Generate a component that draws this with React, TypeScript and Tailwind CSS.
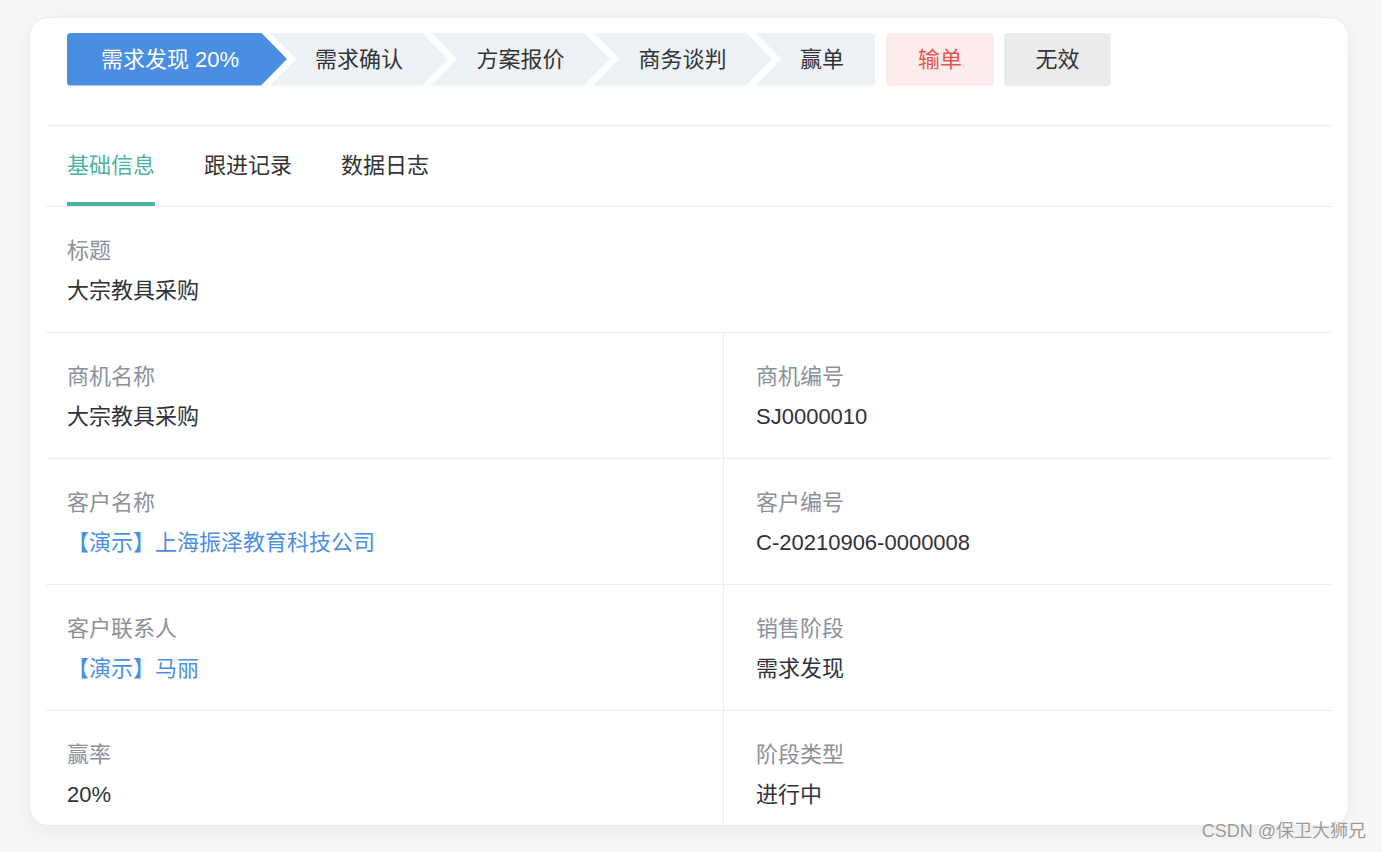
import React from "react";

const FONT = { fontFamily: '"Liberation Sans", "Noto Sans CJK SC", sans-serif' };

const steps = [
  { label: "需求发现 20%", w: "w-[220px]", active: true, first: true },
  { label: "需求确认", w: "w-[178px]" },
  { label: "方案报价", w: "w-[179px]" },
  { label: "商务谈判", w: "w-[179px]" },
];

function Field({ label, value, link }: { label: string; value: string; link?: boolean }) {
  return (
    <div>
      <div className="text-[22px] leading-[26px] text-[#8c9099]">{label}</div>
      <div className={`mt-[14px] text-[22px] leading-[26px] ${link ? "text-[#4a8fe2]" : "text-[#2f3338]"}`}>{value}</div>
    </div>
  );
}

const rows: [any, any][] = [
  [
    { label: "商机名称", value: "大宗教具采购" },
    { label: "商机编号", value: "SJ0000010" },
  ],
  [
    { label: "客户名称", value: "【演示】上海振泽教育科技公司", link: true },
    { label: "客户编号", value: "C-20210906-0000008" },
  ],
  [
    { label: "客户联系人", value: "【演示】马丽", link: true },
    { label: "销售阶段", value: "需求发现" },
  ],
  [
    { label: "赢率", value: "20%" },
    { label: "阶段类型", value: "进行中" },
  ],
];

export default function App() {
  return (
    <div className="relative w-[1382px] h-[852px] bg-[#f8f8f9] overflow-hidden" style={FONT}>
      <div className="pt-[17px] pl-[29px]">
        <div className="w-[1320px] h-[809px] bg-white rounded-[20px] border border-[#ececf0] shadow-[0_6px_24px_rgba(0,0,0,0.06)] overflow-hidden px-[16px] pt-[14px]">
          {/* stage bar */}
          <div className="flex items-center px-[21px] h-[54px]">
            {steps.map((s) => (
              <div
                key={s.label}
                className={`${s.w} h-[53px] flex items-center justify-center text-[22px] ${
                  s.active ? "bg-[#4a8ee4] text-white rounded-l-[4px] pr-[14px]" : "bg-[#edf2f7] text-[#333] ml-[-17px]"
                }`}
                style={{
                  clipPath: s.first
                    ? "polygon(0 0, calc(100% - 26px) 0, 100% 50%, calc(100% - 26px) 100%, 0 100%)"
                    : "polygon(0 0, calc(100% - 26px) 0, 100% 50%, calc(100% - 26px) 100%, 0 100%, 26px 50%)",
                }}
              >
                {s.label}
              </div>
            ))}
            <div
              className="w-[120px] h-[53px] ml-[-17px] flex items-center justify-center bg-[#edf2f7] text-[#333] text-[22px] rounded-r-[4px] pl-[14px]"
              style={{ clipPath: "polygon(0 0, 100% 0, 100% 100%, 0 100%, 26px 50%)" }}
            >
              赢单
            </div>
            <div className="w-[108px] h-[53px] ml-[11px] flex items-center justify-center bg-[#fdecec] text-[#e5544f] text-[22px] rounded-[4px]">
              输单
            </div>
            <div className="w-[107px] h-[53px] ml-[10px] flex items-center justify-center bg-[#ebebeb] text-[#333] text-[22px] rounded-[4px]">
              无效
            </div>
          </div>

          {/* tabs */}
          <div className="mt-[39px] border-t border-b border-[#ebedf0] h-[82px] flex items-end px-[21px] gap-[49px]">
            {["基础信息", "跟进记录", "数据日志"].map((t, i) => (
              <div key={t} className="h-full flex flex-col justify-end">
                <div className={`text-[22px] leading-[26px] ${i === 0 ? "text-[#4bb3a4]" : "text-[#333]"}`}>{t}</div>
                <div className={`mt-[23px] h-[4px] rounded-t-[1px] ${i === 0 ? "bg-[#4bb3a4]" : "bg-transparent"}`} />
              </div>
            ))}
          </div>

          {/* fields */}
          <div className="h-[126px] border-b border-[#ebedf0] pt-[31px] px-[21px]">
            <Field label="标题" value="大宗教具采购" />
          </div>
          {rows.map((r, i) => (
            <div key={i} className={`grid grid-cols-[678px_1fr] h-[126px] ${i < rows.length - 1 ? "border-b border-[#ebedf0]" : ""}`}>
              <div className="pt-[31px] px-[21px] border-r border-[#ebedf0]">
                <Field {...r[0]} />
              </div>
              <div className="pt-[31px] pl-[32px]">
                <Field {...r[1]} />
              </div>
            </div>
          ))}
        </div>
      </div>

      <div
        className="absolute right-[16px] bottom-[7px] text-[18px] text-[#9a9a9a]"
        style={{ fontFamily: '"Liberation Sans", "Noto Sans CJK SC", sans-serif', textShadow: "0 0 2px #fff" }}
      >
        CSDN @保卫大狮兄
      </div>
    </div>
  );
}
